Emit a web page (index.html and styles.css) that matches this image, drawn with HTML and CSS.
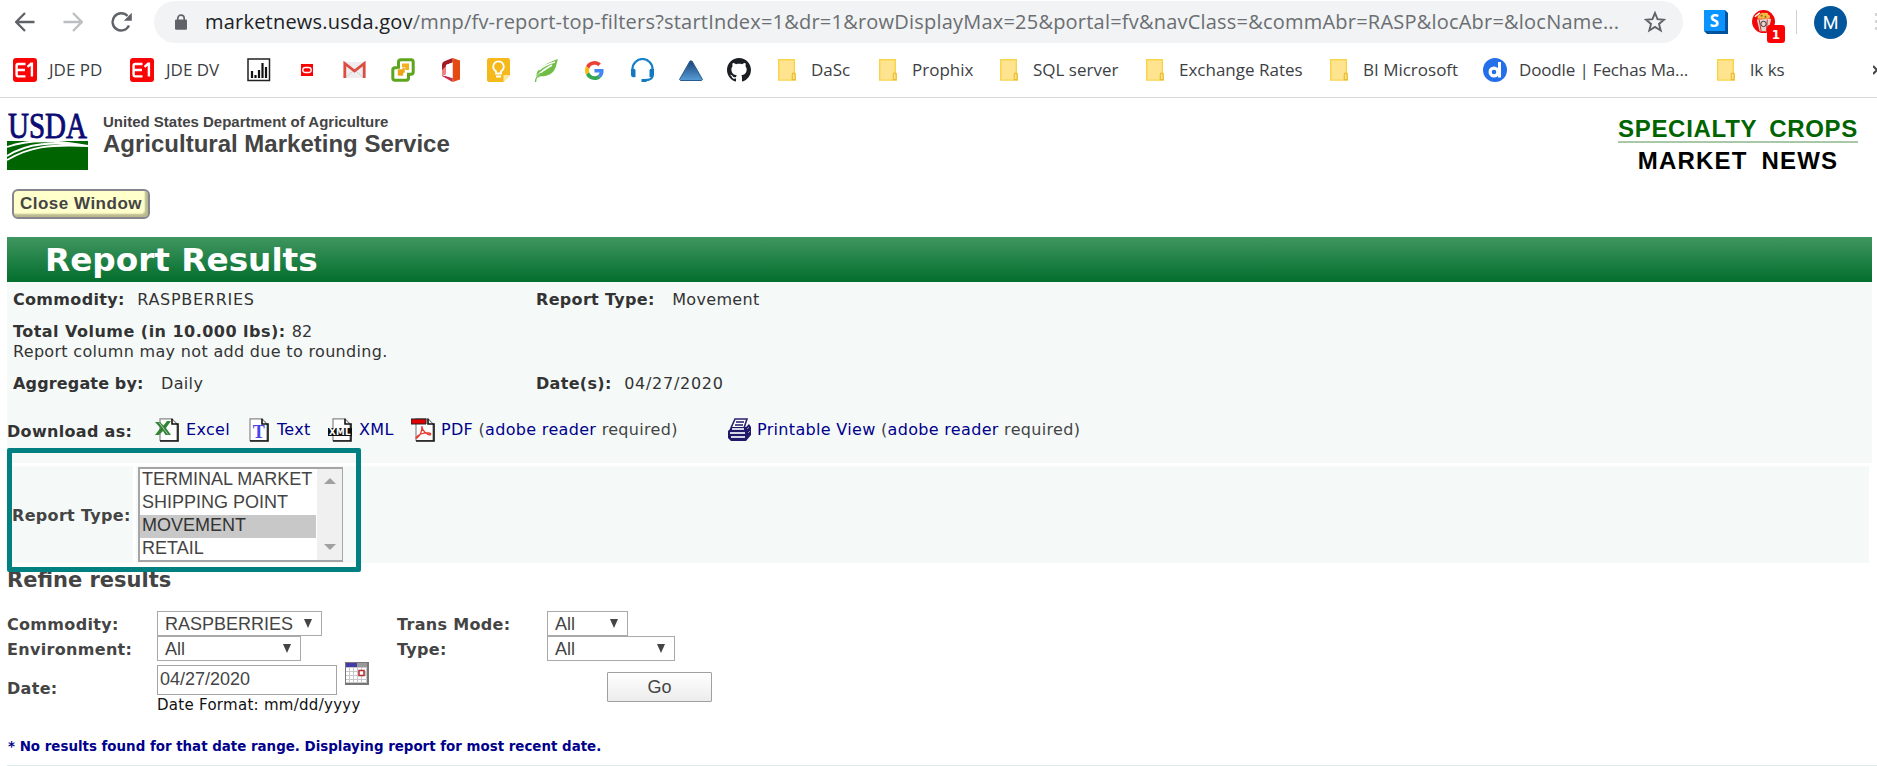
FILE: index.html
```html
<!DOCTYPE html>
<html lang="en">
<head>
<meta charset="utf-8">
<title>Report Results</title>
<link rel="stylesheet" href="styles.css">
</head>
<body>
<svg width="0" height="0" class="defs" aria-hidden="true">
  <symbol id="folder" viewBox="0 0 18 22"><path d="M.7.7h15.6v14h1.1v6.4H.7z" fill="#ffe48f" stroke="#f8d34c" stroke-width="1.4"/><path d="M14.3 20.6v-5.4q0-1 1.4-1t1.4 1v5.4z" fill="#ffe48f" stroke="#e9bd35" stroke-width="1.2"/></symbol>
  <symbol id="e1" viewBox="0 0 24 24"><rect width="24" height="24" rx="3" fill="#fa0505"/><path d="M12.500 6H5.200Q3.600 6 3.600 7.600v9Q3.600 18.400 5.200 18.400h7.300M4 12h8M14.500 8.800l3.600-3h.8v12.800" fill="none" stroke="#fff" stroke-width="2.400"/></symbol>
  <symbol id="page" viewBox="0 0 24 24"><path d="M5 .8h12L22 6v16.500H5z" fill="#fff" stroke="#888" stroke-width="1.2"/><path d="M17 .8V6h6v17H5" fill="none" stroke="#111" stroke-width="1.6"/></symbol>
</svg>

<header class="browser">
  <div class="toolbar">
    <svg class="nav back" viewBox="0 0 20 20"><path d="M19.5 10H1.5M10 1L1.2 10l8.8 9" fill="none" stroke="#5f6368" stroke-width="2.3"/></svg>
    <svg class="nav fwd" viewBox="0 0 20 20"><path d="M.5 10h18M10 1l8.8 9-8.8 9" fill="none" stroke="#bcbec1" stroke-width="2.3"/></svg>
    <svg class="nav reload" viewBox="0 0 22 20"><path d="M18 13.5A8.6 8.6 0 1 1 16.5 4" fill="none" stroke="#5f6368" stroke-width="2.4"/><path d="M20.8.8v8h-8z" fill="#5f6368"/></svg>
    <div class="omnibox">
      <svg class="lock" viewBox="0 0 12 16"><path d="M2.8 7V4.3a3.2 3.2 0 0 1 6.4 0V7" fill="none" stroke="#5f6368" stroke-width="1.6"/><rect y="5.4" width="12" height="10.3" rx="1.2" fill="#5f6368"/></svg>
      <span class="url"><b>marketnews.usda.gov</b>/mnp/fv-report-top-filters?startIndex=1&amp;dr=1&amp;rowDisplayMax=25&amp;portal=fv&amp;navClass=&amp;commAbr=RASP&amp;locAbr=&amp;locName...</span>
      <svg class="star" viewBox="0 0 22 22"><path d="M11 2l2.5 6.2 6.6.5-5.1 4.2 1.7 6.6L11 15.900l-5.700 3.600L7 12.900 1.900 8.700l6.600-.5z" fill="none" stroke="#5f6368" stroke-width="1.900"/></svg>
    </div>
    <svg class="ext-s" viewBox="0 0 24 24"><path d="M0 0h21l3 3v21H3l-3-3z" fill="#00529c"/><path d="M0 0h21v21H0z" fill="#0a94ff"/><text x="10.500" y="16.500" text-anchor="middle" class="s-letter">S</text></svg>
    <div class="ext-corn">
      <svg viewBox="0 0 24 24"><circle cx="12" cy="12" r="12" fill="#f00808"/><path d="M6 9q-1-3 2-4 1-3 5-2 4-1 4 2 3 1 1 4z" fill="#f2bb43"/><circle cx="10" cy="6" r="1" fill="#9c5b0c"/><circle cx="14" cy="7" r="1" fill="#9c5b0c"/><path d="M5 10l15-1-3 13H8z" fill="#e8d2ca"/><path d="M7.500 10l2 12M16 10l-1 12" stroke="#b63a32"/><circle cx="12" cy="14.500" r="2.800" fill="none" stroke="#333"/><path d="M3 7l5-4" stroke="#fff" stroke-width="1.500"/></svg>
      <span class="badge">1</span>
    </div>
    <i class="sep"></i>
    <span class="avatar">M</span>
    <svg class="dots" viewBox="0 0 3 18"><path d="M1 0h2v3H1zM1 7h2v3H1zM1 14h2v3H1z" fill="#d2d3d5"/></svg>
  </div>

  <nav class="bookmarks">
    <a><svg width="24" height="24"><use href="#e1"/></svg><span class="t1">JDE PD</span></a>
    <a><svg width="24" height="24"><use href="#e1"/></svg><span class="t1">JDE DV</span></a>
    <a><svg width="24" height="24" viewBox="0 0 24 24"><rect x="1" y="1" width="21.500" height="21.500" fill="#fff" stroke="#222" stroke-width="1.500"/><path d="M5 20v-7M8.500 20v-3M12 20v-8M15.500 20V5M19 20V9" stroke="#111" stroke-width="2.200"/></svg></a>
    <a><svg width="12" height="12" viewBox="0 0 12 12"><path d="M0 0h12v12H0z" fill="#f00"/><rect x="1.800" y="3.500" width="8.400" height="5" rx="2.500" fill="none" stroke="#fff" stroke-width="1.300"/></svg></a>
    <a><svg width="23" height="18" viewBox="0 0 23 18"><path d="M1 1h21v16H1z" fill="#eee"/><path d="M3 16l8.500-7 8.500 7" fill="none" stroke="#d5d5d5"/><path d="M1.800 17V2.500L11.500 10l9.700-7.500V17" fill="none" stroke="#dc4c42" stroke-width="2.800"/></svg></a>
    <a><svg width="24" height="24" viewBox="0 0 24 24"><path d="M10 1.800h10q2.200 0 2.200 2.200v10q0 2.200-2.200 2.200h-2.500V20q0 2.200-2.200 2.200H4q-2.200 0-2.200-2.200v-8q0-2.200 2.200-2.200h3.500V4q0-2.200 2.500-2.200z" fill="#fff" stroke="#5ca51c" stroke-width="3"/><path d="M11 5.500h7V12h-7z" fill="#f3b21b"/><path d="M6.500 11h5v-1.500H14V15h-1.500v3h-6z" fill="#eea315" stroke="#fff" stroke-width=".6"/></svg></a>
    <a><svg width="20" height="24" viewBox="0 0 20 24"><path d="M11.500 0L19 2.500v19L11.500 24z" fill="#e64a13"/><path d="M11.500 0L4 3Q1 4 1 7v11l4-2V7l6.500-2.500z" fill="#a31b22"/><path d="M1 18l10.500 6v-4L5 18z" fill="#c92c4a"/><path d="M1 18l4-2V8L1 12z" fill="#ee8282"/><path d="M5 7l6.500-2.500V20L5 18z" fill="#fff"/></svg></a>
    <a><svg width="23" height="24" viewBox="0 0 23 24"><path d="M1.500 0h20L23 1.500V17l-6.500 7h-15L0 22.500v-21z" fill="#f6b91b"/><path d="M16.500 24v-7H23z" fill="#fce7a3"/><path d="M9 15.500v-2.200q-2.800-1.800-2.800-4.600a5.300 5.300 0 0 1 10.600 0q0 2.800-2.800 4.600v2.200zM9 18.500h5" fill="none" stroke="#fff" stroke-width="1.800"/></svg></a>
    <a><svg width="26" height="24" viewBox="0 0 26 24"><path d="M3 20C0 11 13 5 24 1c-2 4-1 15-13 17-3 .500-5-.500-7 2z" fill="#70bd45"/><path d="M1.500 24C2 16 10 12 18 7" fill="none" stroke="#fff" stroke-width="1.700"/><path d="M1.500 24c0-4 2-7 6-9" fill="none" stroke="#70bd45" stroke-width="1.300"/><path d="M5 12Q10 7 21 4" fill="none" stroke="#fff" stroke-width="1.500"/></svg></a>
    <a><svg width="19" height="19" viewBox="0 0 48 48"><path fill="#ea4335" d="M24 9.500c3.540 0 6.710 1.220 9.210 3.600l6.850-6.850C35.900 2.380 30.470 0 24 0 14.620 0 6.510 5.380 2.560 13.220l7.980 6.190C12.430 13.720 17.740 9.500 24 9.500z"/><path fill="#4285f4" d="M46.980 24.550c0-1.570-.15-3.090-.38-4.550H24v9.020h12.940c-.58 2.960-2.260 5.480-4.780 7.180l7.730 6c4.510-4.180 7.090-10.360 7.090-17.650z"/><path fill="#fbbc05" d="M10.530 28.590c-.48-1.450-.76-2.990-.76-4.590s.27-3.140.76-4.590l-7.980-6.190C.92 16.460 0 20.120 0 24s.92 7.540 2.560 10.780z"/><path fill="#34a853" d="M24 48c6.480 0 11.930-2.130 15.890-5.810l-7.730-6c-2.150 1.450-4.920 2.300-8.160 2.300-6.260 0-11.570-4.220-13.470-9.910l-7.980 6.190C6.510 42.620 14.620 48 24 48z"/></svg></a>
    <a><svg width="25" height="24" viewBox="0 0 25 24"><path d="M2.500 13v-2A10 10 0 0 1 22.500 11v2M22.500 18q0 4-8 4.200" fill="none" stroke="#1681c9" stroke-width="2.200"/><path d="M1 11q4-1 4.500 1v7q-4.500 1-4.500-2zM24 11q-4-1-4.500 1v7q4.500 1 4.500-2zM11.500 21h5v3h-5z" fill="#1279c0"/></svg></a>
    <a><svg width="24" height="21" viewBox="0 0 24 21"><defs><linearGradient id="tri" x2="0" y2="1"><stop stop-color="#184578"/><stop offset="1" stop-color="#579cd7"/></linearGradient></defs><path d="M11 1h2l10.500 18.500-1 1h-21l-1-1z" fill="url(#tri)" stroke="#285b91"/></svg></a>
    <a><svg width="24" height="24" viewBox="0 0 16 16"><path fill="#1b1f23" d="M8 0C3.580 0 0 3.580 0 8c0 3.540 2.290 6.530 5.470 7.590.4.070.55-.17.55-.38 0-.19-.01-.82-.01-1.490-2.010.37-2.530-.49-2.690-.94-.09-.23-.48-.94-.82-1.130-.28-.15-.68-.52-.01-.53.63-.01 1.080.58 1.230.82.72 1.210 1.870.87 2.330.66.07-.52.28-.87.51-1.070-1.780-.2-3.640-.89-3.640-3.950 0-.87.310-1.590.82-2.150-.08-.2-.36-1.020.08-2.120 0 0 .67-.21 2.200.82.64-.18 1.320-.27 2-.27s1.360.09 2 .27c1.530-1.040 2.200-.82 2.200-.82.44 1.100.16 1.920.08 2.120.51.56.82 1.270.82 2.150 0 3.070-1.870 3.750-3.650 3.950.29.25.54.73.54 1.480 0 1.070-.01 1.930-.01 2.200 0 .21.150.46.55.38A8.010 8.010 0 0 0 16 8c0-4.420-3.580-8-8-8z"/></svg></a>
    <a><svg width="18" height="22"><use href="#folder"/></svg><span class="f1">DaSc</span></a>
    <a><svg width="18" height="22"><use href="#folder"/></svg><span class="f1">Prophix</span></a>
    <a><svg width="18" height="22"><use href="#folder"/></svg><span class="f1">SQL server</span></a>
    <a><svg width="18" height="22"><use href="#folder"/></svg><span class="f1">Exchange Rates</span></a>
    <a><svg width="18" height="22"><use href="#folder"/></svg><span class="f1">BI Microsoft</span></a>
    <a><svg width="24" height="24" viewBox="0 0 24 24"><circle cx="12" cy="12" r="12" fill="#2370ea"/><circle cx="11" cy="14" r="3.900" fill="none" stroke="#fff" stroke-width="3.200"/><path d="M15 4h3v15.500h-3z" fill="#fff"/></svg><span class="t1 tight">Doodle | Fechas Ma...</span></a>
    <a><svg width="18" height="22"><use href="#folder"/></svg><span class="f1">lk ks</span></a>
    <a><svg width="4" height="10" viewBox="0 0 4 10"><path d="M0 1l4 4-4 4" fill="none" stroke="#444" stroke-width="2"/></svg></a>
  </nav>
</header>

<main class="page">
  <div class="masthead">
    <svg class="usda" viewBox="0 0 81 57"><path d="M0 28h81v29H0z" fill="#006400"/><path d="M0 34C22 26 48 27 81 33M0 43c20-13 46-15 81-10M0 47c22-13 42-16 81-14" fill="none" stroke="#fff" stroke-width="1.800"/><text x="1" y="24.500" textLength="79" lengthAdjust="spacingAndGlyphs" class="usda-text">USDA</text></svg>
    <div class="agency"><div class="dept">United States Department of Agriculture</div><div class="service">Agricultural Marketing Service</div></div>
    <div class="crops"><div class="crops-top">SPECIALTY CROPS</div><div class="crops-bottom">MARKET NEWS</div></div>
  </div>
  <button class="close">Close Window</button>

  <h1 class="banner">Report Results</h1>
  <section class="summary">
    <div class="row r1"><div><b>Commodity:</b><span class="g13 caps">RASPBERRIES</span></div><div><b>Report Type:</b><span class="g18">Movement</span></div></div>
    <div class="row r2"><div><b class="total">Total Volume (in 10.000 lbs):</b><span class="g7">82</span></div></div>
    <div class="row r3"><div>Report column may not add due to rounding.</div></div>
    <div class="row r4"><div><b class="aggregate">Aggregate by:</b><span class="g18">Daily</span></div><div><b>Date(s):</b><span class="g13 caps">04/27/2020</span></div></div>
    <div class="downloads">
      <b>Download as:</b>
      <svg viewBox="0 0 24 24"><use href="#page"/><path d="M0 4h5l3.500 3.500L12 3h4l-5 7 5 7h-5.500L8 13l-4 4H0l5.500-7z" fill="#348236"/><path d="M4 4.500l9 12" stroke="#a5c9a6"/></svg><a class="excel">Excel</a>
      <svg viewBox="0 0 24 24"><use href="#page" x="-2"/><text x="12" y="20" text-anchor="middle" class="t-letter">T</text></svg><a class="text">Text</a>
      <svg viewBox="0 0 24 24"><use href="#page"/><path d="M0 10h24v8H0z" fill="#111"/><text x="1" y="17" textLength="22" lengthAdjust="spacingAndGlyphs" class="x-letter">XML</text></svg><a class="xml">XML</a>
      <svg viewBox="0 0 24 24"><use href="#page"/><path d="M0 1h15v5H0z" fill="#e00000" stroke="#222"/><path d="M11 8q0 8-5 12c-2 1-1-2 4-4s12-1 9 1c-3 0-8-5-8-8" fill="none" stroke="#e83b33" stroke-width="1.300"/></svg><span class="pdf"><a>PDF</a> (<a>adobe reader</a> required)</span>
      <svg class="printer" viewBox="0 0 24 24"><path d="M7 1h12l-3 9H3z" fill="#fff" stroke="#29206f" stroke-width="1.600"/><path d="M8 4h8M7 7h8" stroke="#211a69" stroke-width="1.500"/><path d="M4 9h14l3-3 2 3v8l-5 6H3l-3-3v-7z" fill="#211a69"/><path d="M4 11h12M2 15h15M3 19h14" stroke="#d5d5e8" stroke-width="1.800"/><path d="M19 11l2-2M20 15l2-2" stroke="#8d8cbc"/></svg><span><a>Printable View</a> (<a>adobe reader</a> required)</span>
    </div>
  </section>

  <section class="type-row">
    <div class="type-label">Report Type:</div>
    <div class="type-field">
      <div class="listbox">
        <div class="options"><div>TERMINAL MARKET</div><div>SHIPPING POINT</div><div class="selected">MOVEMENT</div><div>RETAIL</div></div>
        <div class="scroll"><i class="up"></i><i class="down"></i></div>
      </div>
    </div>
    <div class="highlight"></div>
  </section>

  <h2 class="refine">Refine results</h2>
  <form class="filters">
    <label>Commodity:</label><div class="select commodity">RASPBERRIES<i></i></div><label>Trans Mode:</label><div class="select mode">All<i></i></div>
    <label>Environment:</label><div class="select env">All<i></i></div><label>Type:</label><div class="select kind">All<i></i></div>
    <label class="date-label">Date:</label>
    <div class="date">
      <div class="date-line"><div class="input">04/27/2020</div><svg viewBox="0 0 24 23"><path d="M0 0h24v23H0z" fill="#777"/><path d="M1 1h21v20H1z" fill="#c8c8cc"/><path d="M1 1h11v4H1z" fill="#423ca5"/><path d="M12 1h10v4H12z" fill="#999"/><path d="M1 6h3v3H1zM5 6h3v3H5zM9 6h3v3H9zM13 6h3v3h-3zM17 6h4v3h-4zM1 10h3v3H1zM5 10h3v3H5zM9 10h3v3H9zM1 14h3v3H1zM5 14h3v3H5zM9 14h3v3H9zM13 14h3v3h-3zM17 14h4v3h-4zM1 18h3v2H1zM5 18h3v2H5zM9 18h3v2H9zM13 18h3v2h-3zM17 18h4v2h-4z" fill="#fff"/><path d="M14 8.500h5v5h-5z" fill="#fff" stroke="#b72e2e" stroke-width="1.500"/></svg></div>
      <div class="hint">Date Format: mm/dd/yyyy</div>
    </div>
    <div class="go-cell"><button type="button" class="go">Go</button></div>
  </form>
  <p class="notice">* No results found for that date range. Displaying report for most recent date.</p>
</main>
</body>
</html>
```
FILE: styles.css
```css
* { box-sizing: border-box; }
body { margin: 0; background: #fff; color: #444; font-family: "DejaVu Sans", Verdana, sans-serif; font-size: 16px; width: 1877px; height: 766px; overflow: hidden; }
svg { display: block; flex: none; }
.defs { position: absolute; }

/* browser chrome */
.browser { height: 98px; border-bottom: 1px solid #d9dadb; font-family: "Open Sans", "Noto Sans", sans-serif; }
.toolbar { display: flex; align-items: center; height: 44px; padding-left: 15px; }
.nav { width: 20px; height: 20px; }
.fwd { margin-left: 28px; }
.reload { width: 22px; margin-left: 28px; }
.omnibox { display: flex; flex: none; align-items: center; width: 1529px; height: 42px; margin-left: 21px; padding-left: 21px; border-radius: 21px; background: #f1f3f4; }
.lock { width: 12px; height: 16px; }
.url { width: 1420px; margin-left: 18px; font-size: 20px; letter-spacing: 0.210px; line-height: 42px; color: #6b6e72; white-space: nowrap; }
.url b { font-weight: 400; color: #202124; }
.star { width: 22px; height: 22px; margin-left: 19px; }
.ext-s { width: 24px; height: 24px; margin-left: 21px; }
.s-letter { font: 700 17px "Open Sans", sans-serif; fill: #fff; }
.ext-corn { position: relative; width: 24px; margin-left: 24px; }
.badge { position: absolute; left: 15px; top: 15px; width: 18px; height: 18px; border-radius: 3px; background: #f00; color: #fff; font: 700 12px/20px "DejaVu Sans", sans-serif; text-align: center; }
.sep { width: 1px; height: 24px; margin-left: 21px; background: #cfd1d3; }
.avatar { flex: none; width: 33px; height: 33px; margin-left: 17px; border-radius: 50%; background: #02569b; color: #fff; font: 18px/33px Roboto, sans-serif; text-align: center; }
.dots { width: 3px; height: 18px; margin-left: 27px; }

.bookmarks { display: grid; height: 52px; padding-left: 13px; grid-template-columns: 117px 117px 54px 42px 48px 50px 46px 47px 51px 45px 49px 48px 51px 101px 121px 146px 184px 153px 234px 156px 4px; align-items: center; font-size: 17px; color: #3c4043; }
.bookmarks a { display: flex; align-items: center; white-space: nowrap; }
.t1 { margin-left: 12px; }
.f1 { margin-left: 15px; }
.tight { letter-spacing: -0.150px; }
.bookmarks span { padding-bottom: 1px; }

/* masthead */
.page { padding-left: 7px; }
.masthead { display: flex; height: 91px; padding-top: 15px; font-family: "Liberation Sans", Arial, sans-serif; font-weight: 700; }
.usda { width: 81px; height: 57px; overflow: visible; }
.usda-text { font: 400 36px "Liberation Serif", serif; fill: #0b0b73; stroke: #0b0b73; stroke-width: 0.900px; }
.agency { width: 1515px; margin-left: 15px; }
.dept { font-size: 15px; line-height: 17px; }
.service { font-size: 24px; line-height: 28px; }
.crops { width: 240px; padding-top: 4px; text-align: center; font-size: 24px; color: #000; }
.crops-top { height: 26px; line-height: 24px; color: #006400; border-bottom: 2px solid #a8c8a8; letter-spacing: 0.700px; word-spacing: 5px; white-space: nowrap; }
.crops-bottom { line-height: 36px; letter-spacing: 1.200px; word-spacing: 6px; }
.close { display: block; width: 138px; height: 30px; margin-left: 5px; padding: 0; border: 2px solid #85858c; border-radius: 6px; background: #ffffcb; box-shadow: inset -3px -3px 2px #b9b98d; color: #444; font: 700 17px/24px "Liberation Sans", sans-serif; letter-spacing: 0.500px; white-space: nowrap; }

/* report summary */
.banner { width: 1865px; height: 45px; margin: 18px 0 0; padding-left: 38px; background: linear-gradient(#409660, #026e2d); color: #fff; font-size: 32.700px; line-height: 46px; }
.summary { width: 1865px; height: 181px; padding-top: 8px; background: #f5faf9; color: #333; letter-spacing: 0.320px; }
.row { display: grid; grid-template-columns: 523px 1fr; padding-left: 6px; height: 20px; line-height: 20px; }
.r2 { margin-top: 12px; }
.r4 { margin-top: 12px; }
.total { letter-spacing: 0.470px; }
.caps { letter-spacing: 0.720px; }
.aggregate { letter-spacing: 0.150px; }
.g7 { margin-left: 6px; }
.g13 { margin-left: 12.500px; }
.g18 { margin-left: 17.500px; }
.downloads { display: flex; align-items: center; height: 24px; margin-top: 23px; color: #444; white-space: nowrap; }
.downloads b { width: 148px; padding-top: 4px; color: #333; }
.downloads svg { width: 24px; height: 24px; margin-right: 6px; position: relative; top: 1px; }
.downloads a { color: #00008b; }
.downloads .excel { width: 61px; margin-left: 1px; }
.downloads .text { width: 51px; }
.downloads .xml { width: 52px; margin-left: 1px; }
.downloads .pdf { width: 287px; }
.downloads .printer { margin-right: 5px; }
.t-letter { font: 700 18px "Liberation Serif", serif; fill: #4747e8; }
.x-letter { font: 700 9px "DejaVu Sans", sans-serif; fill: #fff; }

.type-row { position: relative; display: flex; gap: 3px; width: 1862px; height: 97px; margin-top: 3px; }
.type-label { width: 126px; padding-left: 5px; background: #f5faf9; font-weight: 700; line-height: 99px; letter-spacing: 0.320px; white-space: nowrap; }
.type-field { flex: 1; padding: 1px 0 0 2px; background: #f5faf9; }
.listbox { display: flex; width: 205px; height: 95px; border: 2px solid #a5a5a5; border-right-width: 1px; background: #fff; font: 18px/23px "Liberation Sans", Arial, sans-serif; }
.options { width: 176px; white-space: nowrap; }
.options div { padding-left: 2px; height: 23px; line-height: 21px; }
.options .selected { background: #c8c8c8; color: #333; }
.scroll { display: flex; flex: 1; flex-direction: column; justify-content: space-between; align-items: center; padding: 9px 0 10px; margin-left: 1px; background: #f0f0f0; }
.up, .down { border: 6px solid transparent; }
.up { border-top: 0; border-bottom-color: #a0a0a0; }
.down { border-bottom: 0; border-top-color: #a0a0a0; }
.highlight { position: absolute; left: 0; top: -18px; width: 354px; height: 124px; border: 5px solid #008080; border-radius: 2px; }

/* filters */
.refine { margin: 4px 0 0; font-size: 21px; line-height: 26px; position: relative; z-index: -1; }
.filters { display: grid; grid-template-columns: 150px 240px 150px 1fr; grid-template-rows: 25px 25px 55px; margin-top: 18px; }
.filters label { font-weight: 700; line-height: 27px; letter-spacing: 0.320px; }
.select { position: relative; height: 25px; padding-left: 7px; border: 1px solid #a9a9a9; background: #fff; font: 18px/24px "Liberation Sans", Arial, sans-serif; }
.select i { position: absolute; right: 9.500px; top: 7px; border: 4.500px solid transparent; border-top: 9px solid #444; border-bottom: 0; }
.commodity { width: 165px; }
.mode { width: 81px; }
.env { width: 144px; }
.kind { width: 128px; }
.filters .date-label { line-height: 55px; }
.date { padding-top: 4px; }
.date-line { display: flex; }
.date-line svg { width: 24px; height: 23px; margin: -3px 0 0 8px; }
.input { width: 180px; height: 30px; padding-left: 2px; border: 1px solid #a5a5a5; font: 18px/27px "Liberation Sans", Arial, sans-serif; }
.hint { color: #111; font-size: 15px; line-height: 21px; letter-spacing: 0.280px; white-space: nowrap; }
.go-cell { grid-column: 4; padding: 11px 0 0 60px; }
.go { width: 105px; height: 30px; padding: 0; border: 1px solid #a0a0a0; border-radius: 1px; background: linear-gradient(#fff, #ececec); color: #444; font: 18px/27px "Liberation Sans", Arial, sans-serif; }
.notice { width: 1870px; height: 31px; margin: 19px 0 0; padding-left: 1px; border-bottom: 1px solid #dfeaea; color: #00008b; font-size: 13.400px; font-weight: 700; line-height: 24px; }
```
